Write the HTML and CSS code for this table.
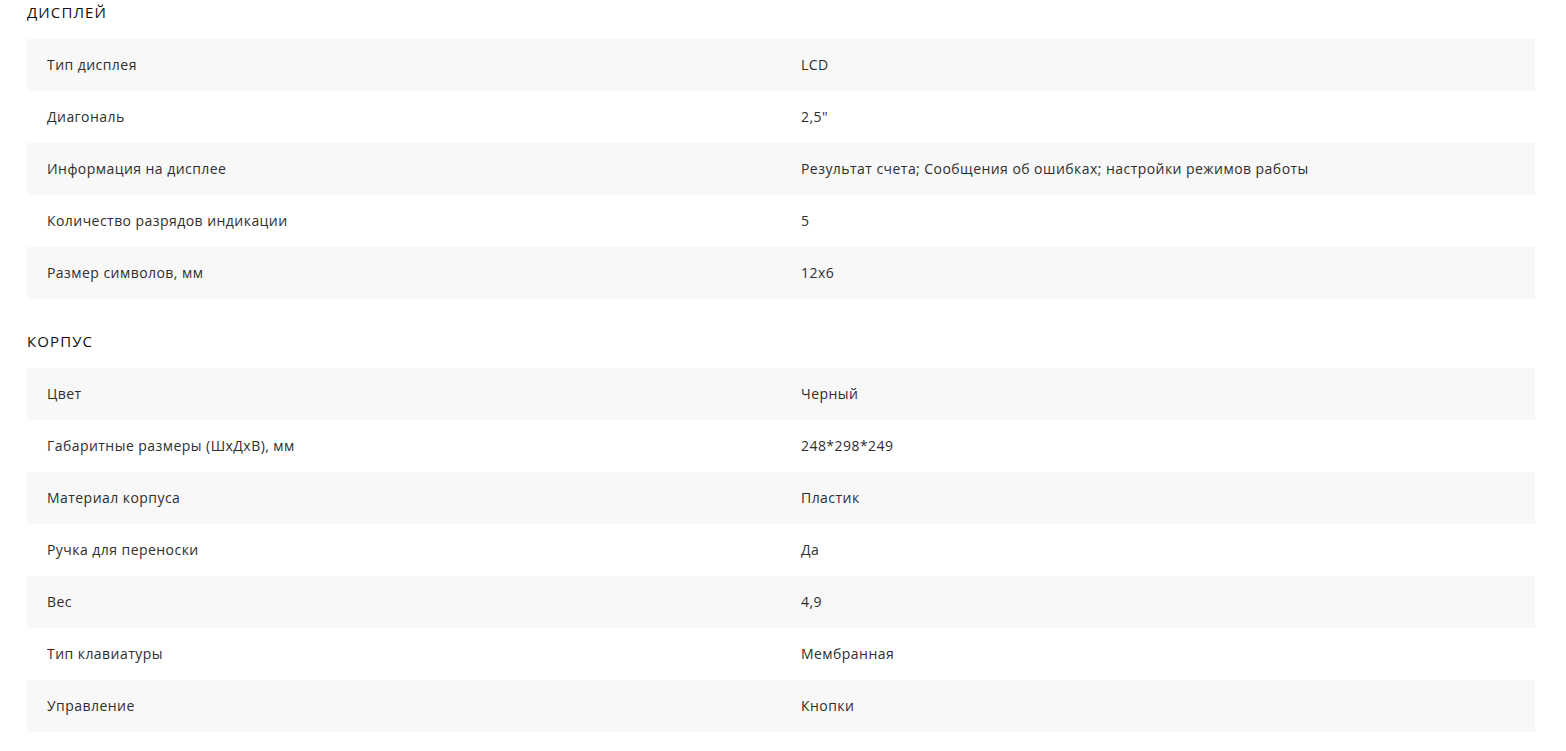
FILE: index.html
```html
<!DOCTYPE html>
<html lang="ru">
<head>
<meta charset="utf-8">
<link rel="stylesheet" href="styles.css">
</head>
<body>
<div class="specs">
  <section class="group">
    <h3 class="group-title">Дисплей</h3>
    <div class="table">
      <div class="row"><div class="cell">Тип дисплея</div><div class="cell">LCD</div></div>
      <div class="row"><div class="cell">Диагональ</div><div class="cell">2,5"</div></div>
      <div class="row"><div class="cell">Информация на дисплее</div><div class="cell">Результат счета; Сообщения об ошибках; настройки режимов работы</div></div>
      <div class="row"><div class="cell">Количество разрядов индикации</div><div class="cell">5</div></div>
      <div class="row"><div class="cell">Размер символов, мм</div><div class="cell">12x6</div></div>
    </div>
  </section>
  <section class="group">
    <h3 class="group-title">Корпус</h3>
    <div class="table">
      <div class="row"><div class="cell">Цвет</div><div class="cell">Черный</div></div>
      <div class="row"><div class="cell">Габаритные размеры (ШхДхВ), мм</div><div class="cell">248*298*249</div></div>
      <div class="row"><div class="cell">Материал корпуса</div><div class="cell">Пластик</div></div>
      <div class="row"><div class="cell">Ручка для переноски</div><div class="cell">Да</div></div>
      <div class="row"><div class="cell">Вес</div><div class="cell">4,9</div></div>
      <div class="row"><div class="cell">Тип клавиатуры</div><div class="cell">Мембранная</div></div>
      <div class="row"><div class="cell">Управление</div><div class="cell">Кнопки</div></div>
    </div>
  </section>
</div>
</body>
</html>
```
FILE: styles.css
```css
html, body {
  margin: 0;
  padding: 0;
  background: #fff;
}
body {
  font-family: "Open Sans", "Noto Sans", sans-serif;
  font-size: 14px;
  color: #2e2e2e;
}
.specs {
  padding: 4px 31px 0 27px;
  display: flex;
  flex-direction: column;
  gap: 34px;
}
.group-title {
  margin: 0 0 18px;
  font-size: 15px;
  line-height: 17px;
  font-weight: 500;
  letter-spacing: 1.1px;
  text-transform: uppercase;
  color: #111;
}
.table {
  display: flex;
  flex-direction: column;
}
.row {
  display: grid;
  grid-template-columns: 1fr 1fr;
  height: 52px;
  align-items: center;
}
.row:nth-child(odd) {
  background: #f8f8f8;
}
.cell {
  padding: 0 20px 1px;
  line-height: 17px;
  letter-spacing: 0.45px;
}
```
